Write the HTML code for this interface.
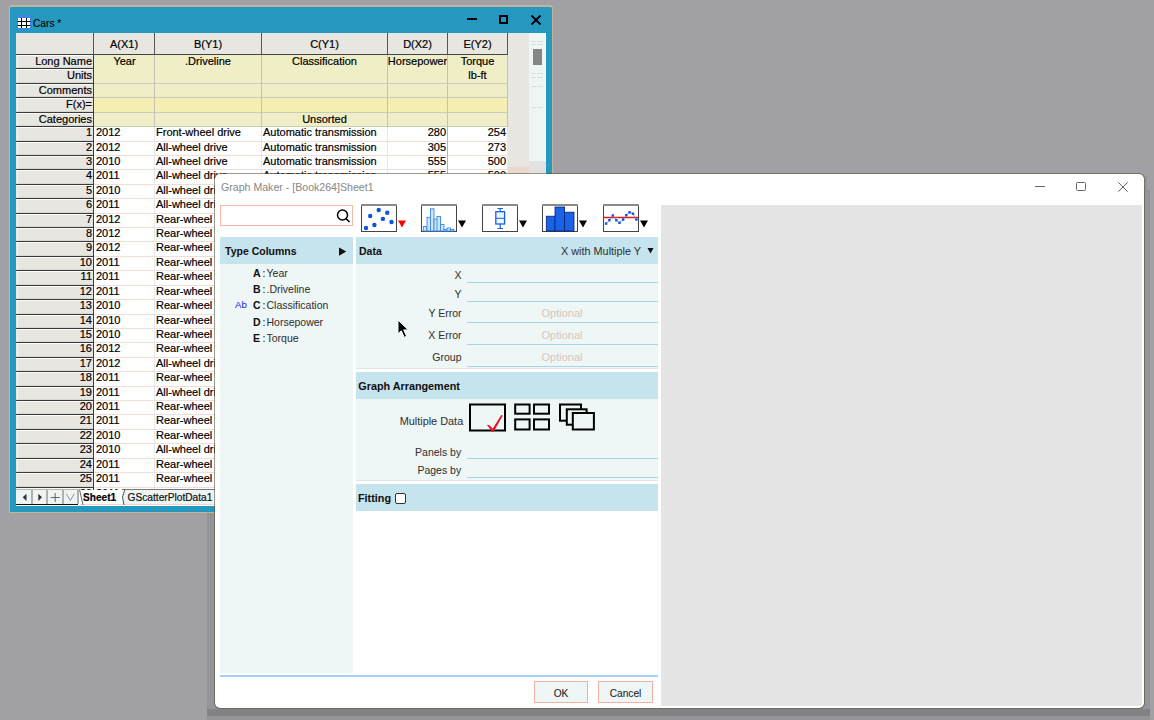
<!DOCTYPE html><html><head><meta charset="utf-8"><style>
html,body{margin:0;padding:0;width:1154px;height:720px;overflow:hidden;background:#a1a0a4;font-family:"Liberation Sans",sans-serif;}
.a{position:absolute;box-sizing:border-box}
.t{position:absolute;white-space:nowrap;-webkit-text-stroke:0.2px currentColor}
.d{-webkit-text-stroke:0.05px currentColor}
</style></head><body>
<div class="a" style="left:207px;top:190px;width:943px;height:530px;background:rgba(0,0,0,0.075);"></div>
<div class="a" style="left:207px;top:709px;width:943px;height:7px;background:rgba(0,0,0,0.12);"></div>
<div class="a" style="left:1145px;top:176px;width:2px;height:14px;background:rgba(0,0,0,0.07);"></div>
<div class="a" style="left:9px;top:5px;width:544px;height:508px;background:#2598c0;border:1px solid #c2b49c;border-top:2px solid #c2b49c;border-radius:3px 3px 0 0;"></div>
<svg class="a" style="left:17px;top:15px" width="14" height="14" viewBox="0 0 14 14">
<rect x="0" y="0" width="14" height="14" fill="#3d87e8"/>
<rect x="1" y="3" width="12" height="10" fill="#fff"/>
<path d="M0.5 6.5H13.5M0.5 10.5H13.5M4.5 3V13M9.5 3V13" stroke="#000" stroke-width="1"/>
</svg>
<div class="t" style="left:33px;top:16.77px;font-size:10.2px;line-height:13px;font-weight:normal;color:#000;-webkit-text-stroke:0.1px #000;">Cars *</div>
<div class="a" style="left:467px;top:18px;width:10px;height:2px;background:#000;"></div>
<div class="a" style="left:499px;top:15px;width:9px;height:9px;border:2px solid #000;"></div>
<svg class="a" style="left:530px;top:14px" width="12" height="12" viewBox="0 0 12 12"><path d="M1.5 1.5L10.5 10.5M10.5 1.5L1.5 10.5" stroke="#000" stroke-width="1.8"/></svg>
<div class="a" style="left:16px;top:33px;width:530px;height:472px;background:#fff;"></div>
<div class="a" style="left:508px;top:33px;width:21px;height:457px;background:#e8e6e0;"></div>
<div class="a" style="left:508px;top:167px;width:21px;height:6px;background:#ead8d0;"></div>
<div class="a" style="left:529px;top:33px;width:16px;height:457px;background:#eef5f5;"></div>
<div class="a" style="left:545px;top:33px;width:1px;height:472px;background:#fff;"></div>
<div class="a" style="left:529px;top:161px;width:17px;height:12px;background:#e2e2e2;"></div>
<div class="a" style="left:533px;top:49px;width:9px;height:16px;background:#858585;"></div>
<div class="a" style="left:531px;top:41px;width:5px;height:1px;background:#dcdede;"></div>
<div class="a" style="left:537px;top:41px;width:6px;height:1px;background:#dcdede;"></div>
<div class="a" style="left:531px;top:44px;width:5px;height:1px;background:#dcdede;"></div>
<div class="a" style="left:537px;top:44px;width:6px;height:1px;background:#dcdede;"></div>
<div class="a" style="left:531px;top:73px;width:5px;height:1px;background:#dcdede;"></div>
<div class="a" style="left:537px;top:73px;width:6px;height:1px;background:#dcdede;"></div>
<div class="a" style="left:531px;top:77px;width:5px;height:1px;background:#dcdede;"></div>
<div class="a" style="left:537px;top:77px;width:6px;height:1px;background:#dcdede;"></div>
<div class="a" style="left:531px;top:86px;width:5px;height:1px;background:#dcdede;"></div>
<div class="a" style="left:537px;top:86px;width:6px;height:1px;background:#dcdede;"></div>
<div class="a" style="left:531px;top:107px;width:5px;height:1px;background:#dcdede;"></div>
<div class="a" style="left:537px;top:107px;width:6px;height:1px;background:#dcdede;"></div>
<div class="a" style="left:16px;top:33px;width:492px;height:21px;background:#e8e6e0;"></div>
<div class="a" style="left:16px;top:54px;width:492px;height:1px;background:#444;"></div>
<div class="a" style="left:93px;top:33px;width:1px;height:22px;background:#555;"></div>
<div class="a" style="left:154px;top:33px;width:1px;height:22px;background:#555;"></div>
<div class="a" style="left:261px;top:33px;width:1px;height:22px;background:#555;"></div>
<div class="a" style="left:387px;top:33px;width:1px;height:22px;background:#555;"></div>
<div class="a" style="left:447px;top:33px;width:1px;height:22px;background:#555;"></div>
<div class="a" style="left:507px;top:33px;width:1px;height:22px;background:#555;"></div>
<div class="t" style="left:64.0px;width:120px;text-align:center;top:37.19px;font-size:11px;line-height:14px;font-weight:normal;color:#000;">A(X1)</div>
<div class="t" style="left:148.0px;width:120px;text-align:center;top:37.19px;font-size:11px;line-height:14px;font-weight:normal;color:#000;">B(Y1)</div>
<div class="t" style="left:264.5px;width:120px;text-align:center;top:37.19px;font-size:11px;line-height:14px;font-weight:normal;color:#000;">C(Y1)</div>
<div class="t" style="left:357.5px;width:120px;text-align:center;top:37.19px;font-size:11px;line-height:14px;font-weight:normal;color:#000;">D(X2)</div>
<div class="t" style="left:417.5px;width:120px;text-align:center;top:37.19px;font-size:11px;line-height:14px;font-weight:normal;color:#000;">E(Y2)</div>
<div class="a" style="left:16px;top:55px;width:77px;height:13px;background:#e8e6e0;"></div>
<div class="a" style="left:16px;top:55px;width:77px;height:1px;background:#fbfbfb;"></div>
<div class="a" style="left:16px;top:67px;width:77px;height:1px;background:#d6d6d2;"></div>
<div class="a" style="left:17px;top:55px;width:1px;height:13px;background:#f2f2f0;"></div>
<div class="a" style="left:94px;top:55px;width:414px;height:13px;background:#efeec7;"></div>
<div class="a" style="left:16px;top:68px;width:77px;height:1px;background:#3a3a3a;"></div>
<div class="a" style="left:94px;top:68px;width:414px;height:1px;background:#efeec7;"></div>
<div class="t" style="right:1062px;top:54.19px;font-size:11px;line-height:14px;font-weight:normal;color:#000;">Long Name</div>
<div class="a" style="left:16px;top:69px;width:77px;height:14px;background:#e8e6e0;"></div>
<div class="a" style="left:16px;top:69px;width:77px;height:1px;background:#fbfbfb;"></div>
<div class="a" style="left:16px;top:82px;width:77px;height:1px;background:#d6d6d2;"></div>
<div class="a" style="left:17px;top:69px;width:1px;height:14px;background:#f2f2f0;"></div>
<div class="a" style="left:94px;top:69px;width:414px;height:14px;background:#efeec7;"></div>
<div class="a" style="left:16px;top:83px;width:77px;height:1px;background:#3a3a3a;"></div>
<div class="a" style="left:94px;top:83px;width:414px;height:1px;background:#cdc9bb;"></div>
<div class="t" style="right:1062px;top:68.19px;font-size:11px;line-height:14px;font-weight:normal;color:#000;">Units</div>
<div class="a" style="left:16px;top:84px;width:77px;height:13px;background:#e8e6e0;"></div>
<div class="a" style="left:16px;top:84px;width:77px;height:1px;background:#fbfbfb;"></div>
<div class="a" style="left:16px;top:96px;width:77px;height:1px;background:#d6d6d2;"></div>
<div class="a" style="left:17px;top:84px;width:1px;height:13px;background:#f2f2f0;"></div>
<div class="a" style="left:94px;top:84px;width:414px;height:13px;background:#efeec7;"></div>
<div class="a" style="left:16px;top:97px;width:77px;height:1px;background:#3a3a3a;"></div>
<div class="a" style="left:94px;top:97px;width:414px;height:1px;background:#cdc9bb;"></div>
<div class="t" style="right:1062px;top:83.19px;font-size:11px;line-height:14px;font-weight:normal;color:#000;">Comments</div>
<div class="a" style="left:16px;top:98px;width:77px;height:14px;background:#e8e6e0;"></div>
<div class="a" style="left:16px;top:98px;width:77px;height:1px;background:#fbfbfb;"></div>
<div class="a" style="left:16px;top:111px;width:77px;height:1px;background:#d6d6d2;"></div>
<div class="a" style="left:17px;top:98px;width:1px;height:14px;background:#f2f2f0;"></div>
<div class="a" style="left:94px;top:98px;width:414px;height:14px;background:#f5eeb3;"></div>
<div class="a" style="left:16px;top:112px;width:77px;height:1px;background:#3a3a3a;"></div>
<div class="a" style="left:94px;top:112px;width:414px;height:1px;background:#cdc9bb;"></div>
<div class="t" style="right:1062px;top:97.19px;font-size:11px;line-height:14px;font-weight:normal;color:#000;">F(x)=</div>
<div class="a" style="left:16px;top:113px;width:77px;height:13px;background:#e8e6e0;"></div>
<div class="a" style="left:16px;top:113px;width:77px;height:1px;background:#fbfbfb;"></div>
<div class="a" style="left:16px;top:125px;width:77px;height:1px;background:#d6d6d2;"></div>
<div class="a" style="left:17px;top:113px;width:1px;height:13px;background:#f2f2f0;"></div>
<div class="a" style="left:94px;top:113px;width:414px;height:13px;background:#efeec7;"></div>
<div class="a" style="left:16px;top:126px;width:77px;height:1px;background:#3a3a3a;"></div>
<div class="a" style="left:94px;top:126px;width:414px;height:1px;background:#c8d0b0;"></div>
<div class="t" style="right:1062px;top:112.19px;font-size:11px;line-height:14px;font-weight:normal;color:#000;">Categories</div>
<div class="a" style="left:16px;top:127px;width:77px;height:14px;background:#e8e6e0;"></div>
<div class="a" style="left:16px;top:127px;width:77px;height:1px;background:#fbfbfb;"></div>
<div class="a" style="left:16px;top:140px;width:77px;height:1px;background:#d6d6d2;"></div>
<div class="a" style="left:17px;top:127px;width:1px;height:14px;background:#f2f2f0;"></div>
<div class="a" style="left:16px;top:141px;width:77px;height:1px;background:#3a3a3a;"></div>
<div class="a" style="left:94px;top:141px;width:414px;height:1px;background:#f2dcd4;"></div>
<div class="t" style="right:1062px;top:124.89px;font-size:11px;line-height:14px;font-weight:normal;color:#000;">1</div>
<div class="t" style="left:96px;top:124.89px;font-size:11px;line-height:14px;font-weight:normal;color:#000;">2012</div>
<div class="t" style="left:156px;top:124.89px;font-size:11px;line-height:14px;font-weight:normal;color:#000;">Front-wheel drive</div>
<div class="t" style="left:263px;top:124.89px;font-size:11px;line-height:14px;font-weight:normal;color:#000;">Automatic transmission</div>
<div class="t" style="right:708px;top:124.89px;font-size:11px;line-height:14px;font-weight:normal;color:#000;">280</div>
<div class="t" style="right:648px;top:124.89px;font-size:11px;line-height:14px;font-weight:normal;color:#000;">254</div>
<div class="a" style="left:16px;top:142px;width:77px;height:13px;background:#e8e6e0;"></div>
<div class="a" style="left:16px;top:142px;width:77px;height:1px;background:#fbfbfb;"></div>
<div class="a" style="left:16px;top:154px;width:77px;height:1px;background:#d6d6d2;"></div>
<div class="a" style="left:17px;top:142px;width:1px;height:13px;background:#f2f2f0;"></div>
<div class="a" style="left:16px;top:155px;width:77px;height:1px;background:#3a3a3a;"></div>
<div class="a" style="left:94px;top:155px;width:414px;height:1px;background:#f2dcd4;"></div>
<div class="t" style="right:1062px;top:139.89px;font-size:11px;line-height:14px;font-weight:normal;color:#000;">2</div>
<div class="t" style="left:96px;top:139.89px;font-size:11px;line-height:14px;font-weight:normal;color:#000;">2012</div>
<div class="t" style="left:156px;top:139.89px;font-size:11px;line-height:14px;font-weight:normal;color:#000;">All-wheel drive</div>
<div class="t" style="left:263px;top:139.89px;font-size:11px;line-height:14px;font-weight:normal;color:#000;">Automatic transmission</div>
<div class="t" style="right:708px;top:139.89px;font-size:11px;line-height:14px;font-weight:normal;color:#000;">305</div>
<div class="t" style="right:648px;top:139.89px;font-size:11px;line-height:14px;font-weight:normal;color:#000;">273</div>
<div class="a" style="left:16px;top:156px;width:77px;height:13px;background:#e8e6e0;"></div>
<div class="a" style="left:16px;top:156px;width:77px;height:1px;background:#fbfbfb;"></div>
<div class="a" style="left:16px;top:168px;width:77px;height:1px;background:#d6d6d2;"></div>
<div class="a" style="left:17px;top:156px;width:1px;height:13px;background:#f2f2f0;"></div>
<div class="a" style="left:16px;top:169px;width:77px;height:1px;background:#3a3a3a;"></div>
<div class="a" style="left:94px;top:169px;width:414px;height:1px;background:#f2dcd4;"></div>
<div class="t" style="right:1062px;top:153.89px;font-size:11px;line-height:14px;font-weight:normal;color:#000;">3</div>
<div class="t" style="left:96px;top:153.89px;font-size:11px;line-height:14px;font-weight:normal;color:#000;">2010</div>
<div class="t" style="left:156px;top:153.89px;font-size:11px;line-height:14px;font-weight:normal;color:#000;">All-wheel drive</div>
<div class="t" style="left:263px;top:153.89px;font-size:11px;line-height:14px;font-weight:normal;color:#000;">Automatic transmission</div>
<div class="t" style="right:708px;top:153.89px;font-size:11px;line-height:14px;font-weight:normal;color:#000;">555</div>
<div class="t" style="right:648px;top:153.89px;font-size:11px;line-height:14px;font-weight:normal;color:#000;">500</div>
<div class="a" style="left:16px;top:170px;width:77px;height:14px;background:#e8e6e0;"></div>
<div class="a" style="left:16px;top:170px;width:77px;height:1px;background:#fbfbfb;"></div>
<div class="a" style="left:16px;top:183px;width:77px;height:1px;background:#d6d6d2;"></div>
<div class="a" style="left:17px;top:170px;width:1px;height:14px;background:#f2f2f0;"></div>
<div class="a" style="left:16px;top:184px;width:77px;height:1px;background:#3a3a3a;"></div>
<div class="a" style="left:94px;top:184px;width:414px;height:1px;background:#f2dcd4;"></div>
<div class="t" style="right:1062px;top:167.89px;font-size:11px;line-height:14px;font-weight:normal;color:#000;">4</div>
<div class="t" style="left:96px;top:167.89px;font-size:11px;line-height:14px;font-weight:normal;color:#000;">2011</div>
<div class="t" style="left:156px;top:167.89px;font-size:11px;line-height:14px;font-weight:normal;color:#000;">All-wheel drive</div>
<div class="t" style="left:263px;top:167.89px;font-size:11px;line-height:14px;font-weight:normal;color:#000;">Automatic transmission</div>
<div class="t" style="right:708px;top:167.89px;font-size:11px;line-height:14px;font-weight:normal;color:#000;">555</div>
<div class="t" style="right:648px;top:167.89px;font-size:11px;line-height:14px;font-weight:normal;color:#000;">500</div>
<div class="a" style="left:16px;top:185px;width:77px;height:13px;background:#e8e6e0;"></div>
<div class="a" style="left:16px;top:185px;width:77px;height:1px;background:#fbfbfb;"></div>
<div class="a" style="left:16px;top:197px;width:77px;height:1px;background:#d6d6d2;"></div>
<div class="a" style="left:17px;top:185px;width:1px;height:13px;background:#f2f2f0;"></div>
<div class="a" style="left:16px;top:198px;width:77px;height:1px;background:#3a3a3a;"></div>
<div class="a" style="left:94px;top:198px;width:414px;height:1px;background:#f2dcd4;"></div>
<div class="t" style="right:1062px;top:182.89px;font-size:11px;line-height:14px;font-weight:normal;color:#000;">5</div>
<div class="t" style="left:96px;top:182.89px;font-size:11px;line-height:14px;font-weight:normal;color:#000;">2010</div>
<div class="t" style="left:156px;top:182.89px;font-size:11px;line-height:14px;font-weight:normal;color:#000;">All-wheel drive</div>
<div class="t" style="left:263px;top:182.89px;font-size:11px;line-height:14px;font-weight:normal;color:#000;">Automatic transmission</div>
<div class="t" style="right:708px;top:182.89px;font-size:11px;line-height:14px;font-weight:normal;color:#000;">555</div>
<div class="t" style="right:648px;top:182.89px;font-size:11px;line-height:14px;font-weight:normal;color:#000;">500</div>
<div class="a" style="left:16px;top:199px;width:77px;height:14px;background:#e8e6e0;"></div>
<div class="a" style="left:16px;top:199px;width:77px;height:1px;background:#fbfbfb;"></div>
<div class="a" style="left:16px;top:212px;width:77px;height:1px;background:#d6d6d2;"></div>
<div class="a" style="left:17px;top:199px;width:1px;height:14px;background:#f2f2f0;"></div>
<div class="a" style="left:16px;top:213px;width:77px;height:1px;background:#3a3a3a;"></div>
<div class="a" style="left:94px;top:213px;width:414px;height:1px;background:#f2dcd4;"></div>
<div class="t" style="right:1062px;top:196.89px;font-size:11px;line-height:14px;font-weight:normal;color:#000;">6</div>
<div class="t" style="left:96px;top:196.89px;font-size:11px;line-height:14px;font-weight:normal;color:#000;">2011</div>
<div class="t" style="left:156px;top:196.89px;font-size:11px;line-height:14px;font-weight:normal;color:#000;">All-wheel drive</div>
<div class="t" style="left:263px;top:196.89px;font-size:11px;line-height:14px;font-weight:normal;color:#000;">Automatic transmission</div>
<div class="t" style="right:708px;top:196.89px;font-size:11px;line-height:14px;font-weight:normal;color:#000;">555</div>
<div class="t" style="right:648px;top:196.89px;font-size:11px;line-height:14px;font-weight:normal;color:#000;">500</div>
<div class="a" style="left:16px;top:214px;width:77px;height:13px;background:#e8e6e0;"></div>
<div class="a" style="left:16px;top:214px;width:77px;height:1px;background:#fbfbfb;"></div>
<div class="a" style="left:16px;top:226px;width:77px;height:1px;background:#d6d6d2;"></div>
<div class="a" style="left:17px;top:214px;width:1px;height:13px;background:#f2f2f0;"></div>
<div class="a" style="left:16px;top:227px;width:77px;height:1px;background:#3a3a3a;"></div>
<div class="a" style="left:94px;top:227px;width:414px;height:1px;background:#f2dcd4;"></div>
<div class="t" style="right:1062px;top:211.89px;font-size:11px;line-height:14px;font-weight:normal;color:#000;">7</div>
<div class="t" style="left:96px;top:211.89px;font-size:11px;line-height:14px;font-weight:normal;color:#000;">2012</div>
<div class="t" style="left:156px;top:211.89px;font-size:11px;line-height:14px;font-weight:normal;color:#000;">Rear-wheel drive</div>
<div class="t" style="left:263px;top:211.89px;font-size:11px;line-height:14px;font-weight:normal;color:#000;">Automatic transmission</div>
<div class="t" style="right:708px;top:211.89px;font-size:11px;line-height:14px;font-weight:normal;color:#000;">555</div>
<div class="t" style="right:648px;top:211.89px;font-size:11px;line-height:14px;font-weight:normal;color:#000;">500</div>
<div class="a" style="left:16px;top:228px;width:77px;height:13px;background:#e8e6e0;"></div>
<div class="a" style="left:16px;top:228px;width:77px;height:1px;background:#fbfbfb;"></div>
<div class="a" style="left:16px;top:240px;width:77px;height:1px;background:#d6d6d2;"></div>
<div class="a" style="left:17px;top:228px;width:1px;height:13px;background:#f2f2f0;"></div>
<div class="a" style="left:16px;top:241px;width:77px;height:1px;background:#3a3a3a;"></div>
<div class="a" style="left:94px;top:241px;width:414px;height:1px;background:#f2dcd4;"></div>
<div class="t" style="right:1062px;top:225.89px;font-size:11px;line-height:14px;font-weight:normal;color:#000;">8</div>
<div class="t" style="left:96px;top:225.89px;font-size:11px;line-height:14px;font-weight:normal;color:#000;">2012</div>
<div class="t" style="left:156px;top:225.89px;font-size:11px;line-height:14px;font-weight:normal;color:#000;">Rear-wheel drive</div>
<div class="t" style="left:263px;top:225.89px;font-size:11px;line-height:14px;font-weight:normal;color:#000;">Automatic transmission</div>
<div class="t" style="right:708px;top:225.89px;font-size:11px;line-height:14px;font-weight:normal;color:#000;">555</div>
<div class="t" style="right:648px;top:225.89px;font-size:11px;line-height:14px;font-weight:normal;color:#000;">500</div>
<div class="a" style="left:16px;top:242px;width:77px;height:14px;background:#e8e6e0;"></div>
<div class="a" style="left:16px;top:242px;width:77px;height:1px;background:#fbfbfb;"></div>
<div class="a" style="left:16px;top:255px;width:77px;height:1px;background:#d6d6d2;"></div>
<div class="a" style="left:17px;top:242px;width:1px;height:14px;background:#f2f2f0;"></div>
<div class="a" style="left:16px;top:256px;width:77px;height:1px;background:#3a3a3a;"></div>
<div class="a" style="left:94px;top:256px;width:414px;height:1px;background:#f2dcd4;"></div>
<div class="t" style="right:1062px;top:239.89px;font-size:11px;line-height:14px;font-weight:normal;color:#000;">9</div>
<div class="t" style="left:96px;top:239.89px;font-size:11px;line-height:14px;font-weight:normal;color:#000;">2012</div>
<div class="t" style="left:156px;top:239.89px;font-size:11px;line-height:14px;font-weight:normal;color:#000;">Rear-wheel drive</div>
<div class="t" style="left:263px;top:239.89px;font-size:11px;line-height:14px;font-weight:normal;color:#000;">Automatic transmission</div>
<div class="t" style="right:708px;top:239.89px;font-size:11px;line-height:14px;font-weight:normal;color:#000;">555</div>
<div class="t" style="right:648px;top:239.89px;font-size:11px;line-height:14px;font-weight:normal;color:#000;">500</div>
<div class="a" style="left:16px;top:257px;width:77px;height:13px;background:#e8e6e0;"></div>
<div class="a" style="left:16px;top:257px;width:77px;height:1px;background:#fbfbfb;"></div>
<div class="a" style="left:16px;top:269px;width:77px;height:1px;background:#d6d6d2;"></div>
<div class="a" style="left:17px;top:257px;width:1px;height:13px;background:#f2f2f0;"></div>
<div class="a" style="left:16px;top:270px;width:77px;height:1px;background:#3a3a3a;"></div>
<div class="a" style="left:94px;top:270px;width:414px;height:1px;background:#f2dcd4;"></div>
<div class="t" style="right:1062px;top:254.89px;font-size:11px;line-height:14px;font-weight:normal;color:#000;">10</div>
<div class="t" style="left:96px;top:254.89px;font-size:11px;line-height:14px;font-weight:normal;color:#000;">2011</div>
<div class="t" style="left:156px;top:254.89px;font-size:11px;line-height:14px;font-weight:normal;color:#000;">Rear-wheel drive</div>
<div class="t" style="left:263px;top:254.89px;font-size:11px;line-height:14px;font-weight:normal;color:#000;">Automatic transmission</div>
<div class="t" style="right:708px;top:254.89px;font-size:11px;line-height:14px;font-weight:normal;color:#000;">555</div>
<div class="t" style="right:648px;top:254.89px;font-size:11px;line-height:14px;font-weight:normal;color:#000;">500</div>
<div class="a" style="left:16px;top:271px;width:77px;height:14px;background:#e8e6e0;"></div>
<div class="a" style="left:16px;top:271px;width:77px;height:1px;background:#fbfbfb;"></div>
<div class="a" style="left:16px;top:284px;width:77px;height:1px;background:#d6d6d2;"></div>
<div class="a" style="left:17px;top:271px;width:1px;height:14px;background:#f2f2f0;"></div>
<div class="a" style="left:16px;top:285px;width:77px;height:1px;background:#3a3a3a;"></div>
<div class="a" style="left:94px;top:285px;width:414px;height:1px;background:#f2dcd4;"></div>
<div class="t" style="right:1062px;top:268.89px;font-size:11px;line-height:14px;font-weight:normal;color:#000;">11</div>
<div class="t" style="left:96px;top:268.89px;font-size:11px;line-height:14px;font-weight:normal;color:#000;">2011</div>
<div class="t" style="left:156px;top:268.89px;font-size:11px;line-height:14px;font-weight:normal;color:#000;">Rear-wheel drive</div>
<div class="t" style="left:263px;top:268.89px;font-size:11px;line-height:14px;font-weight:normal;color:#000;">Automatic transmission</div>
<div class="t" style="right:708px;top:268.89px;font-size:11px;line-height:14px;font-weight:normal;color:#000;">555</div>
<div class="t" style="right:648px;top:268.89px;font-size:11px;line-height:14px;font-weight:normal;color:#000;">500</div>
<div class="a" style="left:16px;top:286px;width:77px;height:13px;background:#e8e6e0;"></div>
<div class="a" style="left:16px;top:286px;width:77px;height:1px;background:#fbfbfb;"></div>
<div class="a" style="left:16px;top:298px;width:77px;height:1px;background:#d6d6d2;"></div>
<div class="a" style="left:17px;top:286px;width:1px;height:13px;background:#f2f2f0;"></div>
<div class="a" style="left:16px;top:299px;width:77px;height:1px;background:#3a3a3a;"></div>
<div class="a" style="left:94px;top:299px;width:414px;height:1px;background:#f2dcd4;"></div>
<div class="t" style="right:1062px;top:283.89px;font-size:11px;line-height:14px;font-weight:normal;color:#000;">12</div>
<div class="t" style="left:96px;top:283.89px;font-size:11px;line-height:14px;font-weight:normal;color:#000;">2011</div>
<div class="t" style="left:156px;top:283.89px;font-size:11px;line-height:14px;font-weight:normal;color:#000;">Rear-wheel drive</div>
<div class="t" style="left:263px;top:283.89px;font-size:11px;line-height:14px;font-weight:normal;color:#000;">Automatic transmission</div>
<div class="t" style="right:708px;top:283.89px;font-size:11px;line-height:14px;font-weight:normal;color:#000;">555</div>
<div class="t" style="right:648px;top:283.89px;font-size:11px;line-height:14px;font-weight:normal;color:#000;">500</div>
<div class="a" style="left:16px;top:300px;width:77px;height:14px;background:#e8e6e0;"></div>
<div class="a" style="left:16px;top:300px;width:77px;height:1px;background:#fbfbfb;"></div>
<div class="a" style="left:16px;top:313px;width:77px;height:1px;background:#d6d6d2;"></div>
<div class="a" style="left:17px;top:300px;width:1px;height:14px;background:#f2f2f0;"></div>
<div class="a" style="left:16px;top:314px;width:77px;height:1px;background:#3a3a3a;"></div>
<div class="a" style="left:94px;top:314px;width:414px;height:1px;background:#f2dcd4;"></div>
<div class="t" style="right:1062px;top:297.89px;font-size:11px;line-height:14px;font-weight:normal;color:#000;">13</div>
<div class="t" style="left:96px;top:297.89px;font-size:11px;line-height:14px;font-weight:normal;color:#000;">2010</div>
<div class="t" style="left:156px;top:297.89px;font-size:11px;line-height:14px;font-weight:normal;color:#000;">Rear-wheel drive</div>
<div class="t" style="left:263px;top:297.89px;font-size:11px;line-height:14px;font-weight:normal;color:#000;">Automatic transmission</div>
<div class="t" style="right:708px;top:297.89px;font-size:11px;line-height:14px;font-weight:normal;color:#000;">555</div>
<div class="t" style="right:648px;top:297.89px;font-size:11px;line-height:14px;font-weight:normal;color:#000;">500</div>
<div class="a" style="left:16px;top:315px;width:77px;height:13px;background:#e8e6e0;"></div>
<div class="a" style="left:16px;top:315px;width:77px;height:1px;background:#fbfbfb;"></div>
<div class="a" style="left:16px;top:327px;width:77px;height:1px;background:#d6d6d2;"></div>
<div class="a" style="left:17px;top:315px;width:1px;height:13px;background:#f2f2f0;"></div>
<div class="a" style="left:16px;top:328px;width:77px;height:1px;background:#3a3a3a;"></div>
<div class="a" style="left:94px;top:328px;width:414px;height:1px;background:#f2dcd4;"></div>
<div class="t" style="right:1062px;top:312.89px;font-size:11px;line-height:14px;font-weight:normal;color:#000;">14</div>
<div class="t" style="left:96px;top:312.89px;font-size:11px;line-height:14px;font-weight:normal;color:#000;">2010</div>
<div class="t" style="left:156px;top:312.89px;font-size:11px;line-height:14px;font-weight:normal;color:#000;">Rear-wheel drive</div>
<div class="t" style="left:263px;top:312.89px;font-size:11px;line-height:14px;font-weight:normal;color:#000;">Automatic transmission</div>
<div class="t" style="right:708px;top:312.89px;font-size:11px;line-height:14px;font-weight:normal;color:#000;">555</div>
<div class="t" style="right:648px;top:312.89px;font-size:11px;line-height:14px;font-weight:normal;color:#000;">500</div>
<div class="a" style="left:16px;top:329px;width:77px;height:13px;background:#e8e6e0;"></div>
<div class="a" style="left:16px;top:329px;width:77px;height:1px;background:#fbfbfb;"></div>
<div class="a" style="left:16px;top:341px;width:77px;height:1px;background:#d6d6d2;"></div>
<div class="a" style="left:17px;top:329px;width:1px;height:13px;background:#f2f2f0;"></div>
<div class="a" style="left:16px;top:342px;width:77px;height:1px;background:#3a3a3a;"></div>
<div class="a" style="left:94px;top:342px;width:414px;height:1px;background:#f2dcd4;"></div>
<div class="t" style="right:1062px;top:326.89px;font-size:11px;line-height:14px;font-weight:normal;color:#000;">15</div>
<div class="t" style="left:96px;top:326.89px;font-size:11px;line-height:14px;font-weight:normal;color:#000;">2010</div>
<div class="t" style="left:156px;top:326.89px;font-size:11px;line-height:14px;font-weight:normal;color:#000;">Rear-wheel drive</div>
<div class="t" style="left:263px;top:326.89px;font-size:11px;line-height:14px;font-weight:normal;color:#000;">Automatic transmission</div>
<div class="t" style="right:708px;top:326.89px;font-size:11px;line-height:14px;font-weight:normal;color:#000;">555</div>
<div class="t" style="right:648px;top:326.89px;font-size:11px;line-height:14px;font-weight:normal;color:#000;">500</div>
<div class="a" style="left:16px;top:343px;width:77px;height:14px;background:#e8e6e0;"></div>
<div class="a" style="left:16px;top:343px;width:77px;height:1px;background:#fbfbfb;"></div>
<div class="a" style="left:16px;top:356px;width:77px;height:1px;background:#d6d6d2;"></div>
<div class="a" style="left:17px;top:343px;width:1px;height:14px;background:#f2f2f0;"></div>
<div class="a" style="left:16px;top:357px;width:77px;height:1px;background:#3a3a3a;"></div>
<div class="a" style="left:94px;top:357px;width:414px;height:1px;background:#f2dcd4;"></div>
<div class="t" style="right:1062px;top:340.89px;font-size:11px;line-height:14px;font-weight:normal;color:#000;">16</div>
<div class="t" style="left:96px;top:340.89px;font-size:11px;line-height:14px;font-weight:normal;color:#000;">2012</div>
<div class="t" style="left:156px;top:340.89px;font-size:11px;line-height:14px;font-weight:normal;color:#000;">Rear-wheel drive</div>
<div class="t" style="left:263px;top:340.89px;font-size:11px;line-height:14px;font-weight:normal;color:#000;">Automatic transmission</div>
<div class="t" style="right:708px;top:340.89px;font-size:11px;line-height:14px;font-weight:normal;color:#000;">555</div>
<div class="t" style="right:648px;top:340.89px;font-size:11px;line-height:14px;font-weight:normal;color:#000;">500</div>
<div class="a" style="left:16px;top:358px;width:77px;height:13px;background:#e8e6e0;"></div>
<div class="a" style="left:16px;top:358px;width:77px;height:1px;background:#fbfbfb;"></div>
<div class="a" style="left:16px;top:370px;width:77px;height:1px;background:#d6d6d2;"></div>
<div class="a" style="left:17px;top:358px;width:1px;height:13px;background:#f2f2f0;"></div>
<div class="a" style="left:16px;top:371px;width:77px;height:1px;background:#3a3a3a;"></div>
<div class="a" style="left:94px;top:371px;width:414px;height:1px;background:#f2dcd4;"></div>
<div class="t" style="right:1062px;top:355.89px;font-size:11px;line-height:14px;font-weight:normal;color:#000;">17</div>
<div class="t" style="left:96px;top:355.89px;font-size:11px;line-height:14px;font-weight:normal;color:#000;">2012</div>
<div class="t" style="left:156px;top:355.89px;font-size:11px;line-height:14px;font-weight:normal;color:#000;">All-wheel drive</div>
<div class="t" style="left:263px;top:355.89px;font-size:11px;line-height:14px;font-weight:normal;color:#000;">Automatic transmission</div>
<div class="t" style="right:708px;top:355.89px;font-size:11px;line-height:14px;font-weight:normal;color:#000;">555</div>
<div class="t" style="right:648px;top:355.89px;font-size:11px;line-height:14px;font-weight:normal;color:#000;">500</div>
<div class="a" style="left:16px;top:372px;width:77px;height:14px;background:#e8e6e0;"></div>
<div class="a" style="left:16px;top:372px;width:77px;height:1px;background:#fbfbfb;"></div>
<div class="a" style="left:16px;top:385px;width:77px;height:1px;background:#d6d6d2;"></div>
<div class="a" style="left:17px;top:372px;width:1px;height:14px;background:#f2f2f0;"></div>
<div class="a" style="left:16px;top:386px;width:77px;height:1px;background:#3a3a3a;"></div>
<div class="a" style="left:94px;top:386px;width:414px;height:1px;background:#f2dcd4;"></div>
<div class="t" style="right:1062px;top:369.89px;font-size:11px;line-height:14px;font-weight:normal;color:#000;">18</div>
<div class="t" style="left:96px;top:369.89px;font-size:11px;line-height:14px;font-weight:normal;color:#000;">2011</div>
<div class="t" style="left:156px;top:369.89px;font-size:11px;line-height:14px;font-weight:normal;color:#000;">Rear-wheel drive</div>
<div class="t" style="left:263px;top:369.89px;font-size:11px;line-height:14px;font-weight:normal;color:#000;">Automatic transmission</div>
<div class="t" style="right:708px;top:369.89px;font-size:11px;line-height:14px;font-weight:normal;color:#000;">555</div>
<div class="t" style="right:648px;top:369.89px;font-size:11px;line-height:14px;font-weight:normal;color:#000;">500</div>
<div class="a" style="left:16px;top:387px;width:77px;height:13px;background:#e8e6e0;"></div>
<div class="a" style="left:16px;top:387px;width:77px;height:1px;background:#fbfbfb;"></div>
<div class="a" style="left:16px;top:399px;width:77px;height:1px;background:#d6d6d2;"></div>
<div class="a" style="left:17px;top:387px;width:1px;height:13px;background:#f2f2f0;"></div>
<div class="a" style="left:16px;top:400px;width:77px;height:1px;background:#3a3a3a;"></div>
<div class="a" style="left:94px;top:400px;width:414px;height:1px;background:#f2dcd4;"></div>
<div class="t" style="right:1062px;top:384.89px;font-size:11px;line-height:14px;font-weight:normal;color:#000;">19</div>
<div class="t" style="left:96px;top:384.89px;font-size:11px;line-height:14px;font-weight:normal;color:#000;">2011</div>
<div class="t" style="left:156px;top:384.89px;font-size:11px;line-height:14px;font-weight:normal;color:#000;">All-wheel drive</div>
<div class="t" style="left:263px;top:384.89px;font-size:11px;line-height:14px;font-weight:normal;color:#000;">Automatic transmission</div>
<div class="t" style="right:708px;top:384.89px;font-size:11px;line-height:14px;font-weight:normal;color:#000;">555</div>
<div class="t" style="right:648px;top:384.89px;font-size:11px;line-height:14px;font-weight:normal;color:#000;">500</div>
<div class="a" style="left:16px;top:401px;width:77px;height:13px;background:#e8e6e0;"></div>
<div class="a" style="left:16px;top:401px;width:77px;height:1px;background:#fbfbfb;"></div>
<div class="a" style="left:16px;top:413px;width:77px;height:1px;background:#d6d6d2;"></div>
<div class="a" style="left:17px;top:401px;width:1px;height:13px;background:#f2f2f0;"></div>
<div class="a" style="left:16px;top:414px;width:77px;height:1px;background:#3a3a3a;"></div>
<div class="a" style="left:94px;top:414px;width:414px;height:1px;background:#f2dcd4;"></div>
<div class="t" style="right:1062px;top:398.89px;font-size:11px;line-height:14px;font-weight:normal;color:#000;">20</div>
<div class="t" style="left:96px;top:398.89px;font-size:11px;line-height:14px;font-weight:normal;color:#000;">2011</div>
<div class="t" style="left:156px;top:398.89px;font-size:11px;line-height:14px;font-weight:normal;color:#000;">Rear-wheel drive</div>
<div class="t" style="left:263px;top:398.89px;font-size:11px;line-height:14px;font-weight:normal;color:#000;">Automatic transmission</div>
<div class="t" style="right:708px;top:398.89px;font-size:11px;line-height:14px;font-weight:normal;color:#000;">555</div>
<div class="t" style="right:648px;top:398.89px;font-size:11px;line-height:14px;font-weight:normal;color:#000;">500</div>
<div class="a" style="left:16px;top:415px;width:77px;height:14px;background:#e8e6e0;"></div>
<div class="a" style="left:16px;top:415px;width:77px;height:1px;background:#fbfbfb;"></div>
<div class="a" style="left:16px;top:428px;width:77px;height:1px;background:#d6d6d2;"></div>
<div class="a" style="left:17px;top:415px;width:1px;height:14px;background:#f2f2f0;"></div>
<div class="a" style="left:16px;top:429px;width:77px;height:1px;background:#3a3a3a;"></div>
<div class="a" style="left:94px;top:429px;width:414px;height:1px;background:#f2dcd4;"></div>
<div class="t" style="right:1062px;top:412.89px;font-size:11px;line-height:14px;font-weight:normal;color:#000;">21</div>
<div class="t" style="left:96px;top:412.89px;font-size:11px;line-height:14px;font-weight:normal;color:#000;">2011</div>
<div class="t" style="left:156px;top:412.89px;font-size:11px;line-height:14px;font-weight:normal;color:#000;">Rear-wheel drive</div>
<div class="t" style="left:263px;top:412.89px;font-size:11px;line-height:14px;font-weight:normal;color:#000;">Automatic transmission</div>
<div class="t" style="right:708px;top:412.89px;font-size:11px;line-height:14px;font-weight:normal;color:#000;">555</div>
<div class="t" style="right:648px;top:412.89px;font-size:11px;line-height:14px;font-weight:normal;color:#000;">500</div>
<div class="a" style="left:16px;top:430px;width:77px;height:13px;background:#e8e6e0;"></div>
<div class="a" style="left:16px;top:430px;width:77px;height:1px;background:#fbfbfb;"></div>
<div class="a" style="left:16px;top:442px;width:77px;height:1px;background:#d6d6d2;"></div>
<div class="a" style="left:17px;top:430px;width:1px;height:13px;background:#f2f2f0;"></div>
<div class="a" style="left:16px;top:443px;width:77px;height:1px;background:#3a3a3a;"></div>
<div class="a" style="left:94px;top:443px;width:414px;height:1px;background:#f2dcd4;"></div>
<div class="t" style="right:1062px;top:427.89px;font-size:11px;line-height:14px;font-weight:normal;color:#000;">22</div>
<div class="t" style="left:96px;top:427.89px;font-size:11px;line-height:14px;font-weight:normal;color:#000;">2010</div>
<div class="t" style="left:156px;top:427.89px;font-size:11px;line-height:14px;font-weight:normal;color:#000;">Rear-wheel drive</div>
<div class="t" style="left:263px;top:427.89px;font-size:11px;line-height:14px;font-weight:normal;color:#000;">Automatic transmission</div>
<div class="t" style="right:708px;top:427.89px;font-size:11px;line-height:14px;font-weight:normal;color:#000;">555</div>
<div class="t" style="right:648px;top:427.89px;font-size:11px;line-height:14px;font-weight:normal;color:#000;">500</div>
<div class="a" style="left:16px;top:444px;width:77px;height:14px;background:#e8e6e0;"></div>
<div class="a" style="left:16px;top:444px;width:77px;height:1px;background:#fbfbfb;"></div>
<div class="a" style="left:16px;top:457px;width:77px;height:1px;background:#d6d6d2;"></div>
<div class="a" style="left:17px;top:444px;width:1px;height:14px;background:#f2f2f0;"></div>
<div class="a" style="left:16px;top:458px;width:77px;height:1px;background:#3a3a3a;"></div>
<div class="a" style="left:94px;top:458px;width:414px;height:1px;background:#f2dcd4;"></div>
<div class="t" style="right:1062px;top:441.89px;font-size:11px;line-height:14px;font-weight:normal;color:#000;">23</div>
<div class="t" style="left:96px;top:441.89px;font-size:11px;line-height:14px;font-weight:normal;color:#000;">2010</div>
<div class="t" style="left:156px;top:441.89px;font-size:11px;line-height:14px;font-weight:normal;color:#000;">All-wheel drive</div>
<div class="t" style="left:263px;top:441.89px;font-size:11px;line-height:14px;font-weight:normal;color:#000;">Automatic transmission</div>
<div class="t" style="right:708px;top:441.89px;font-size:11px;line-height:14px;font-weight:normal;color:#000;">555</div>
<div class="t" style="right:648px;top:441.89px;font-size:11px;line-height:14px;font-weight:normal;color:#000;">500</div>
<div class="a" style="left:16px;top:459px;width:77px;height:13px;background:#e8e6e0;"></div>
<div class="a" style="left:16px;top:459px;width:77px;height:1px;background:#fbfbfb;"></div>
<div class="a" style="left:16px;top:471px;width:77px;height:1px;background:#d6d6d2;"></div>
<div class="a" style="left:17px;top:459px;width:1px;height:13px;background:#f2f2f0;"></div>
<div class="a" style="left:16px;top:472px;width:77px;height:1px;background:#3a3a3a;"></div>
<div class="a" style="left:94px;top:472px;width:414px;height:1px;background:#f2dcd4;"></div>
<div class="t" style="right:1062px;top:456.89px;font-size:11px;line-height:14px;font-weight:normal;color:#000;">24</div>
<div class="t" style="left:96px;top:456.89px;font-size:11px;line-height:14px;font-weight:normal;color:#000;">2011</div>
<div class="t" style="left:156px;top:456.89px;font-size:11px;line-height:14px;font-weight:normal;color:#000;">Rear-wheel drive</div>
<div class="t" style="left:263px;top:456.89px;font-size:11px;line-height:14px;font-weight:normal;color:#000;">Automatic transmission</div>
<div class="t" style="right:708px;top:456.89px;font-size:11px;line-height:14px;font-weight:normal;color:#000;">555</div>
<div class="t" style="right:648px;top:456.89px;font-size:11px;line-height:14px;font-weight:normal;color:#000;">500</div>
<div class="a" style="left:16px;top:473px;width:77px;height:14px;background:#e8e6e0;"></div>
<div class="a" style="left:16px;top:473px;width:77px;height:1px;background:#fbfbfb;"></div>
<div class="a" style="left:16px;top:486px;width:77px;height:1px;background:#d6d6d2;"></div>
<div class="a" style="left:17px;top:473px;width:1px;height:14px;background:#f2f2f0;"></div>
<div class="a" style="left:16px;top:487px;width:77px;height:1px;background:#3a3a3a;"></div>
<div class="a" style="left:94px;top:487px;width:414px;height:1px;background:#f2dcd4;"></div>
<div class="t" style="right:1062px;top:470.89px;font-size:11px;line-height:14px;font-weight:normal;color:#000;">25</div>
<div class="t" style="left:96px;top:470.89px;font-size:11px;line-height:14px;font-weight:normal;color:#000;">2011</div>
<div class="t" style="left:156px;top:470.89px;font-size:11px;line-height:14px;font-weight:normal;color:#000;">Rear-wheel drive</div>
<div class="t" style="left:263px;top:470.89px;font-size:11px;line-height:14px;font-weight:normal;color:#000;">Automatic transmission</div>
<div class="t" style="right:708px;top:470.89px;font-size:11px;line-height:14px;font-weight:normal;color:#000;">555</div>
<div class="t" style="right:648px;top:470.89px;font-size:11px;line-height:14px;font-weight:normal;color:#000;">500</div>
<div class="a" style="left:16px;top:488px;width:77px;height:2px;background:#e8e6e0;"></div>
<div class="a" style="left:16px;top:488px;width:77px;height:1px;background:#fbfbfb;"></div>
<div class="a" style="left:17px;top:488px;width:1px;height:2px;background:#f2f2f0;"></div>
<div class="t" style="right:1062px;top:485.89px;font-size:11px;line-height:14px;font-weight:normal;color:#000;">26</div>
<div class="t" style="left:96px;top:485.89px;font-size:11px;line-height:14px;font-weight:normal;color:#000;">2011</div>
<div class="t" style="left:156px;top:485.89px;font-size:11px;line-height:14px;font-weight:normal;color:#000;">Rear-wheel drive</div>
<div class="t" style="left:263px;top:485.89px;font-size:11px;line-height:14px;font-weight:normal;color:#000;">Automatic transmission</div>
<div class="t" style="right:708px;top:485.89px;font-size:11px;line-height:14px;font-weight:normal;color:#000;">555</div>
<div class="t" style="right:648px;top:485.89px;font-size:11px;line-height:14px;font-weight:normal;color:#000;">500</div>
<div class="t" style="left:94.5px;width:60px;text-align:center;top:54.19px;font-size:11px;line-height:14px;font-weight:normal;color:#000;">Year</div>
<div class="t" style="left:158.0px;width:100px;text-align:center;top:54.19px;font-size:11px;line-height:14px;font-weight:normal;color:#000;">.Driveline</div>
<div class="t" style="left:264.5px;width:120px;text-align:center;top:54.19px;font-size:11px;line-height:14px;font-weight:normal;color:#000;">Classification</div>
<div class="t" style="left:377.5px;width:80px;text-align:center;top:54.19px;font-size:11px;line-height:14px;font-weight:normal;color:#000;">Horsepower</div>
<div class="t" style="left:447.5px;width:60px;text-align:center;top:54.19px;font-size:11px;line-height:14px;font-weight:normal;color:#000;">Torque</div>
<div class="t" style="left:447.5px;width:60px;text-align:center;top:68.19px;font-size:11px;line-height:14px;font-weight:normal;color:#000;">lb-ft</div>
<div class="t" style="left:264.5px;width:120px;text-align:center;top:112.19px;font-size:11px;line-height:14px;font-weight:normal;color:#000;">Unsorted</div>
<div class="a" style="left:93px;top:55px;width:1px;height:435px;background:#3a3a3a;"></div>
<div class="a" style="left:154px;top:55px;width:1px;height:72px;background:#c4c2b6;"></div>
<div class="a" style="left:154px;top:127px;width:1px;height:363px;background:#e4e8ea;"></div>
<div class="a" style="left:261px;top:55px;width:1px;height:72px;background:#c4c2b6;"></div>
<div class="a" style="left:261px;top:127px;width:1px;height:363px;background:#e4e8ea;"></div>
<div class="a" style="left:387px;top:55px;width:1px;height:72px;background:#c4c2b6;"></div>
<div class="a" style="left:387px;top:127px;width:1px;height:363px;background:#e4e8ea;"></div>
<div class="a" style="left:447px;top:55px;width:1px;height:72px;background:#c4c2b6;"></div>
<div class="a" style="left:447px;top:127px;width:1px;height:363px;background:#b4b4bc;"></div>
<div class="a" style="left:507px;top:55px;width:1px;height:72px;background:#c4c2b6;"></div>
<div class="a" style="left:507px;top:127px;width:1px;height:363px;background:#e4e8ea;"></div>
<div class="a" style="left:16px;top:490px;width:530px;height:16px;background:#fff;"></div>
<div class="a" style="left:16px;top:489px;width:62px;height:1px;background:#b8b8b8;"></div>
<div class="a" style="left:16px;top:490px;width:62px;height:14px;background:#eef4f4;"></div>
<div class="a" style="left:16px;top:504px;width:62px;height:1px;background:#111;"></div>
<div class="a" style="left:31px;top:490px;width:2px;height:14px;background:#b0b0b0;"></div>
<div class="a" style="left:46px;top:490px;width:2px;height:14px;background:#b0b0b0;"></div>
<div class="a" style="left:62px;top:490px;width:2px;height:14px;background:#b0b0b0;"></div>
<div class="a" style="left:77px;top:490px;width:2px;height:14px;background:#b0b0b0;"></div>
<svg class="a" style="left:16px;top:490px" width="64" height="14" viewBox="0 0 64 14"><path d="M10.5 3.7L6.7 7.35L10.5 11Z" fill="#333"/><path d="M22.3 3.7L26 7.35L22.3 11Z" fill="#333"/><path d="M34.7 7.5H43.7M39.2 3V12" stroke="#666" stroke-width="1"/><path d="M50.3 3.7L54.3 10.5L58.3 3.7" stroke="#888" stroke-width="0.9" fill="none"/></svg>
<div class="a" style="left:122px;top:489px;width:424px;height:1px;background:#777;"></div>
<div class="a" style="left:122px;top:490px;width:424px;height:14px;background:#eef4f4;"></div>
<div class="a" style="left:80px;top:504px;width:466px;height:1px;background:#ecd8d0;"></div>
<svg class="a" style="left:76px;top:488px" width="60" height="18" viewBox="0 0 60 18"><path d="M3.5 1.5L7 17" stroke="#666" stroke-width="1" fill="none"/><path d="M48 17L46.5 9L49 1.5" stroke="#555" stroke-width="1" fill="none"/></svg>
<div class="t" style="left:83px;top:491.30px;font-size:10.1px;line-height:13px;font-weight:bold;color:#000;">Sheet1</div>
<div class="t" style="left:127.5px;top:491.27px;font-size:10.2px;line-height:13px;font-weight:normal;color:#111;">GScatterPlotData1</div>
<div class="a" style="left:214px;top:173px;width:931px;height:536px;background:#fff;border:1px solid rgba(72,72,50,0.55);border-radius:6px;background-clip:padding-box;"></div>
<div class="t d" style="left:221px;top:180.53px;font-size:10.6px;line-height:13px;font-weight:normal;color:#8a8a8a;">Graph Maker - [Book264]Sheet1</div>
<div class="a" style="left:1035px;top:186px;width:10px;height:1px;background:#666;"></div>
<div class="a" style="left:1076px;top:182px;width:10px;height:9px;border:1px solid #6a6a6a;border-radius:1.5px;"></div>
<svg class="a" style="left:1118px;top:181.5px" width="10" height="10" viewBox="0 0 10 10"><path d="M0.3 0.3L9.7 9.7M9.7 0.3L0.3 9.7" stroke="#666" stroke-width="1"/></svg>
<div class="a" style="left:661px;top:205px;width:481px;height:501px;background:#e5e5e5;"></div>
<div class="a" style="left:220px;top:205px;width:133px;height:21px;border:1px solid #f2b8a8;background:#fff;"></div>
<svg class="a" style="left:335px;top:208px" width="16" height="16" viewBox="0 0 16 16"><circle cx="7.5" cy="7" r="5" stroke="#000" stroke-width="1.5" fill="none"/><path d="M11 10.5L14.5 14" stroke="#000" stroke-width="1.6"/></svg>
<svg class="a" style="left:361px;top:204px" width="46" height="28" viewBox="0 0 46 28"><rect x="0.5" y="1" width="35" height="26.5" fill="#fff" stroke="#444" stroke-width="1"/><path d="M0 1H36" stroke="#8a8a8a" stroke-width="2"/><circle cx="5" cy="24" r="2.2" fill="#0a55e0"/><circle cx="13.4" cy="21" r="2.2" fill="#0a55e0"/><circle cx="9.2" cy="12" r="2.2" fill="#0a55e0"/><circle cx="17.7" cy="6" r="2.2" fill="#0a55e0"/><circle cx="26.2" cy="8.8" r="2.2" fill="#0a55e0"/><circle cx="21.9" cy="14.9" r="2.2" fill="#0a55e0"/><circle cx="30.5" cy="18" r="2.2" fill="#0a55e0"/><path d="M37 16.5H45L41 23.5Z" fill="#f00"/></svg>
<svg class="a" style="left:421px;top:204px" width="46" height="28" viewBox="0 0 46 28"><rect x="0.5" y="1" width="35" height="26.5" fill="#fff" stroke="#444" stroke-width="1"/><path d="M0 1H36" stroke="#8a8a8a" stroke-width="2"/><rect x="2.3" y="22.5" width="3.5" height="4.5" fill="#cfe8f0" stroke="#3a86f0" stroke-width="0.9"/><rect x="6" y="13.300000000000011" width="3.5" height="13.699999999999989" fill="#cfe8f0" stroke="#3a86f0" stroke-width="0.9"/><rect x="9.5" y="4.800000000000011" width="3.5" height="22.19999999999999" fill="#cfe8f0" stroke="#3a86f0" stroke-width="0.9"/><rect x="13" y="15.099999999999994" width="3.5" height="11.900000000000006" fill="#cfe8f0" stroke="#3a86f0" stroke-width="0.9"/><rect x="16" y="12.5" width="3.5" height="14.5" fill="#cfe8f0" stroke="#3a86f0" stroke-width="0.9"/><rect x="19.5" y="20.400000000000006" width="3.5" height="6.599999999999994" fill="#cfe8f0" stroke="#3a86f0" stroke-width="0.9"/><rect x="23" y="25.400000000000006" width="3.5" height="1.5999999999999943" fill="#cfe8f0" stroke="#3a86f0" stroke-width="0.9"/><rect x="26" y="24" width="3.5" height="3" fill="#cfe8f0" stroke="#3a86f0" stroke-width="0.9"/><rect x="29.5" y="25.400000000000006" width="3.5" height="1.5999999999999943" fill="#cfe8f0" stroke="#3a86f0" stroke-width="0.9"/><path d="M37 16.5H45L41 23.5Z" fill="#000"/></svg>
<svg class="a" style="left:482px;top:204px" width="46" height="28" viewBox="0 0 46 28"><rect x="0.5" y="1" width="35" height="26.5" fill="#fff" stroke="#444" stroke-width="1"/><path d="M0 1H36" stroke="#8a8a8a" stroke-width="2"/><path d="M15.5 4.5H21M18.2 4.5V7.5M18.2 20V24.5M15.5 24.5H21" stroke="#1560e8" stroke-width="1.2"/><rect x="13.8" y="7.7" width="8.8" height="12.3" fill="#eef6f8" stroke="#1560e8" stroke-width="1.3"/><path d="M13.8 14.3H22.6" stroke="#1560e8" stroke-width="1"/><path d="M37 16.5H45L41 23.5Z" fill="#000"/></svg>
<svg class="a" style="left:542px;top:204px" width="46" height="28" viewBox="0 0 46 28"><rect x="0.5" y="1" width="35" height="26.5" fill="#fff" stroke="#444" stroke-width="1"/><path d="M0 1H36" stroke="#8a8a8a" stroke-width="2"/><rect x="4.3" y="12.2" width="8.7" height="14.8" fill="#1b63e6" stroke="#02227a" stroke-width="0.8"/><rect x="13" y="3" width="9.6" height="24" fill="#1b63e6" stroke="#02227a" stroke-width="0.8"/><rect x="22.6" y="8.2" width="9.4" height="18.8" fill="#1b63e6" stroke="#02227a" stroke-width="0.8"/><path d="M37 16.5H45L41 23.5Z" fill="#000"/></svg>
<svg class="a" style="left:603px;top:204px" width="46" height="28" viewBox="0 0 46 28"><rect x="0.5" y="1" width="35" height="26.5" fill="#fff" stroke="#444" stroke-width="1"/><path d="M0 1H36" stroke="#8a8a8a" stroke-width="2"/><path d="M0.5 13.5H35.5" stroke="#f01818" stroke-width="1.5"/><polyline points="3.1,19.6 6.4,16.2 9.8,11.5 13.3,16.2 16.5,18.8 20.1,15.6 23.3,11.2 26.6,8.3 30.0,9.7 33.4,15.5" fill="none" stroke="#4a90f0" stroke-width="0.8"/><rect x="1.9" y="18.4" width="2.4" height="2.4" fill="#0a55e0"/><rect x="5.2" y="15.0" width="2.4" height="2.4" fill="#0a55e0"/><rect x="8.6" y="10.3" width="2.4" height="2.4" fill="#0a55e0"/><rect x="12.1" y="15.0" width="2.4" height="2.4" fill="#0a55e0"/><rect x="15.3" y="17.6" width="2.4" height="2.4" fill="#0a55e0"/><rect x="18.9" y="14.4" width="2.4" height="2.4" fill="#0a55e0"/><rect x="22.1" y="10.0" width="2.4" height="2.4" fill="#0a55e0"/><rect x="25.4" y="7.1" width="2.4" height="2.4" fill="#0a55e0"/><rect x="28.8" y="8.5" width="2.4" height="2.4" fill="#0a55e0"/><rect x="32.2" y="14.3" width="2.4" height="2.4" fill="#0a55e0"/><path d="M37 16.5H45L41 23.5Z" fill="#000"/></svg>
<div class="a" style="left:220px;top:237px;width:133px;height:436px;background:#eef6f6;"></div>
<div class="a" style="left:220px;top:237px;width:133px;height:27px;background:#c5e4ee;"></div>
<div class="t d" style="left:225px;top:244.86px;font-size:10.5px;line-height:13px;font-weight:bold;color:#111;">Type Columns</div>
<svg class="a" style="left:338px;top:246.5px" width="10" height="10" viewBox="0 0 10 10"><path d="M1 0.5L8.3 4.6L1 8.7Z" fill="#111"/></svg>
<div class="t d" style="left:253px;top:266.56px;font-size:10.5px;line-height:13px;font-weight:normal;color:#111;"><b>A</b></div>
<div class="t d" style="left:262.5px;top:266.56px;font-size:10.5px;line-height:13px;font-weight:normal;color:#222;">:</div>
<div class="t d" style="left:266.5px;top:266.56px;font-size:10.5px;line-height:13px;font-weight:normal;color:#333;">Year</div>
<div class="t d" style="left:253px;top:282.66px;font-size:10.5px;line-height:13px;font-weight:normal;color:#111;"><b>B</b></div>
<div class="t d" style="left:262.5px;top:282.66px;font-size:10.5px;line-height:13px;font-weight:normal;color:#222;">:</div>
<div class="t d" style="left:266.5px;top:282.66px;font-size:10.5px;line-height:13px;font-weight:normal;color:#333;">.Driveline</div>
<div class="t d" style="left:253px;top:298.66px;font-size:10.5px;line-height:13px;font-weight:normal;color:#111;"><b>C</b></div>
<div class="t d" style="left:262.5px;top:298.66px;font-size:10.5px;line-height:13px;font-weight:normal;color:#222;">:</div>
<div class="t d" style="left:266.5px;top:298.66px;font-size:10.5px;line-height:13px;font-weight:normal;color:#333;">Classification</div>
<div class="t d" style="left:253px;top:315.66px;font-size:10.5px;line-height:13px;font-weight:normal;color:#111;"><b>D</b></div>
<div class="t d" style="left:262.5px;top:315.66px;font-size:10.5px;line-height:13px;font-weight:normal;color:#222;">:</div>
<div class="t d" style="left:266.5px;top:315.66px;font-size:10.5px;line-height:13px;font-weight:normal;color:#333;">Horsepower</div>
<div class="t d" style="left:253px;top:331.66px;font-size:10.5px;line-height:13px;font-weight:normal;color:#111;"><b>E</b></div>
<div class="t d" style="left:262.5px;top:331.66px;font-size:10.5px;line-height:13px;font-weight:normal;color:#222;">:</div>
<div class="t d" style="left:266.5px;top:331.66px;font-size:10.5px;line-height:13px;font-weight:normal;color:#333;">Torque</div>
<div class="t d" style="left:235px;top:298.67px;font-size:9.6px;line-height:12px;font-weight:normal;color:#1a2cf0;">Ab</div>
<div class="a" style="left:356px;top:237px;width:302px;height:132px;background:#eef6f6;"></div>
<div class="a" style="left:356px;top:237px;width:302px;height:27px;background:#c5e4ee;"></div>
<div class="t d" style="left:359px;top:244.66px;font-size:10.5px;line-height:13px;font-weight:bold;color:#111;">Data</div>
<div class="t d" style="right:513px;top:244.14px;font-size:10.85px;line-height:14px;font-weight:normal;color:#333;">X with Multiple Y</div>
<svg class="a" style="left:647px;top:247px" width="8" height="8" viewBox="0 0 8 8"><path d="M0.5 1H6.5L3.5 6.5Z" fill="#111"/></svg>
<div class="t d" style="right:692.5px;top:269.06px;font-size:10.5px;line-height:13px;font-weight:normal;color:#333;">X</div>
<div class="a" style="left:467px;top:282px;width:191px;height:1px;background:#a8d4e8;"></div>
<div class="t d" style="right:692.5px;top:288.16px;font-size:10.5px;line-height:13px;font-weight:normal;color:#333;">Y</div>
<div class="a" style="left:467px;top:301px;width:191px;height:1px;background:#a8d4e8;"></div>
<div class="t d" style="right:692.5px;top:306.86px;font-size:10.5px;line-height:13px;font-weight:normal;color:#333;">Y Error</div>
<div class="a" style="left:467px;top:322px;width:191px;height:1px;background:#a8d4e8;"></div>
<div class="t d" style="left:512.0px;width:100px;text-align:center;top:306.19px;font-size:11px;line-height:14px;font-weight:normal;color:#d8c8c0;">Optional</div>
<div class="t d" style="right:692.5px;top:328.56px;font-size:10.5px;line-height:13px;font-weight:normal;color:#333;">X Error</div>
<div class="a" style="left:467px;top:344px;width:191px;height:1px;background:#a8d4e8;"></div>
<div class="t d" style="left:512.0px;width:100px;text-align:center;top:327.89px;font-size:11px;line-height:14px;font-weight:normal;color:#d8c8c0;">Optional</div>
<div class="t d" style="right:692.5px;top:350.76px;font-size:10.5px;line-height:13px;font-weight:normal;color:#333;">Group</div>
<div class="a" style="left:467px;top:366px;width:191px;height:1px;background:#a8d4e8;"></div>
<div class="t d" style="left:512.0px;width:100px;text-align:center;top:350.09px;font-size:11px;line-height:14px;font-weight:normal;color:#d8c8c0;">Optional</div>
<div class="a" style="left:356px;top:368px;width:302px;height:1px;background:#e0e4e4;"></div>
<div class="a" style="left:356px;top:372px;width:302px;height:108px;background:#eef6f6;"></div>
<div class="a" style="left:356px;top:372px;width:302px;height:27px;background:#c5e4ee;"></div>
<div class="t d" style="left:358.3px;top:379.26px;font-size:10.8px;line-height:14px;font-weight:bold;color:#111;">Graph Arrangement</div>
<div class="t d" style="right:690.8px;top:413.62px;font-size:10.9px;line-height:14px;font-weight:normal;color:#333;">Multiple Data</div>
<svg class="a" style="left:468px;top:402px" width="130" height="30" viewBox="0 0 130 30">
<rect x="2" y="2.5" width="35" height="26" fill="none" stroke="#000" stroke-width="2"/>
<path d="M19.6 23.2L21.2 23.6L24.8 27.2L33.6 13.2L34.2 13.8L25.4 29.4L24.4 29.4Z" fill="#e8101c" stroke="#e8101c" stroke-width="0.9" stroke-linejoin="round"/>
<rect x="47.2" y="2.5" width="14.4" height="9.2" fill="none" stroke="#000" stroke-width="2"/>
<rect x="66" y="2.5" width="15" height="9.2" fill="none" stroke="#000" stroke-width="2"/>
<rect x="47.2" y="17.4" width="14.4" height="10.1" fill="none" stroke="#000" stroke-width="2"/>
<rect x="66" y="17.4" width="15" height="10.1" fill="none" stroke="#000" stroke-width="2"/>
<rect x="92" y="2.5" width="21" height="16.2" fill="#eef6f6" stroke="#000" stroke-width="2"/>
<rect x="98.8" y="7.3" width="19.8" height="15.4" fill="#eef6f6" stroke="#000" stroke-width="2"/>
<rect x="104.8" y="11" width="21.1" height="16.5" fill="#eef6f6" stroke="#000" stroke-width="2"/>
</svg>
<div class="t d" style="right:692.8px;top:446.06px;font-size:10.5px;line-height:13px;font-weight:normal;color:#333;">Panels by</div>
<div class="t d" style="right:692.8px;top:464.26px;font-size:10.5px;line-height:13px;font-weight:normal;color:#333;">Pages by</div>
<div class="a" style="left:467px;top:458px;width:191px;height:1px;background:#a8d4e8;"></div>
<div class="a" style="left:467px;top:477px;width:191px;height:1px;background:#a8d4e8;"></div>
<div class="a" style="left:356px;top:480px;width:302px;height:1px;background:#e0e4e4;"></div>
<div class="a" style="left:356px;top:484px;width:302px;height:27px;background:#c5e4ee;"></div>
<div class="t d" style="left:358px;top:490.76px;font-size:10.8px;line-height:14px;font-weight:bold;color:#111;">Fitting</div>
<div class="a" style="left:395px;top:493px;width:11px;height:11px;background:#fff;border:1px solid #333;border-radius:2px;"></div>
<div class="a" style="left:220px;top:675px;width:438px;height:2px;background:#a8d0f0;"></div>
<div class="a" style="left:534px;top:681px;width:54px;height:22px;background:#eef6f6;border:1px solid #f2b0a0;"></div>
<div class="t d" style="left:534.0px;width:54px;text-align:center;top:686.67px;font-size:10.2px;line-height:13px;font-weight:normal;color:#222;">OK</div>
<div class="a" style="left:598px;top:681px;width:55px;height:22px;background:#eef6f6;border:1px solid #f2b0a0;"></div>
<div class="t d" style="left:598.0px;width:55px;text-align:center;top:686.67px;font-size:10.2px;line-height:13px;font-weight:normal;color:#222;">Cancel</div>
<svg class="a" style="left:396px;top:318px" width="16" height="22" viewBox="0 0 16 22"><path d="M2 2V15.8L5.3 12.8L8.2 19.3L10.6 18.3L7.7 11.9H12.3Z" fill="#000" stroke="#fff" stroke-width="1"/></svg>
</body></html>
